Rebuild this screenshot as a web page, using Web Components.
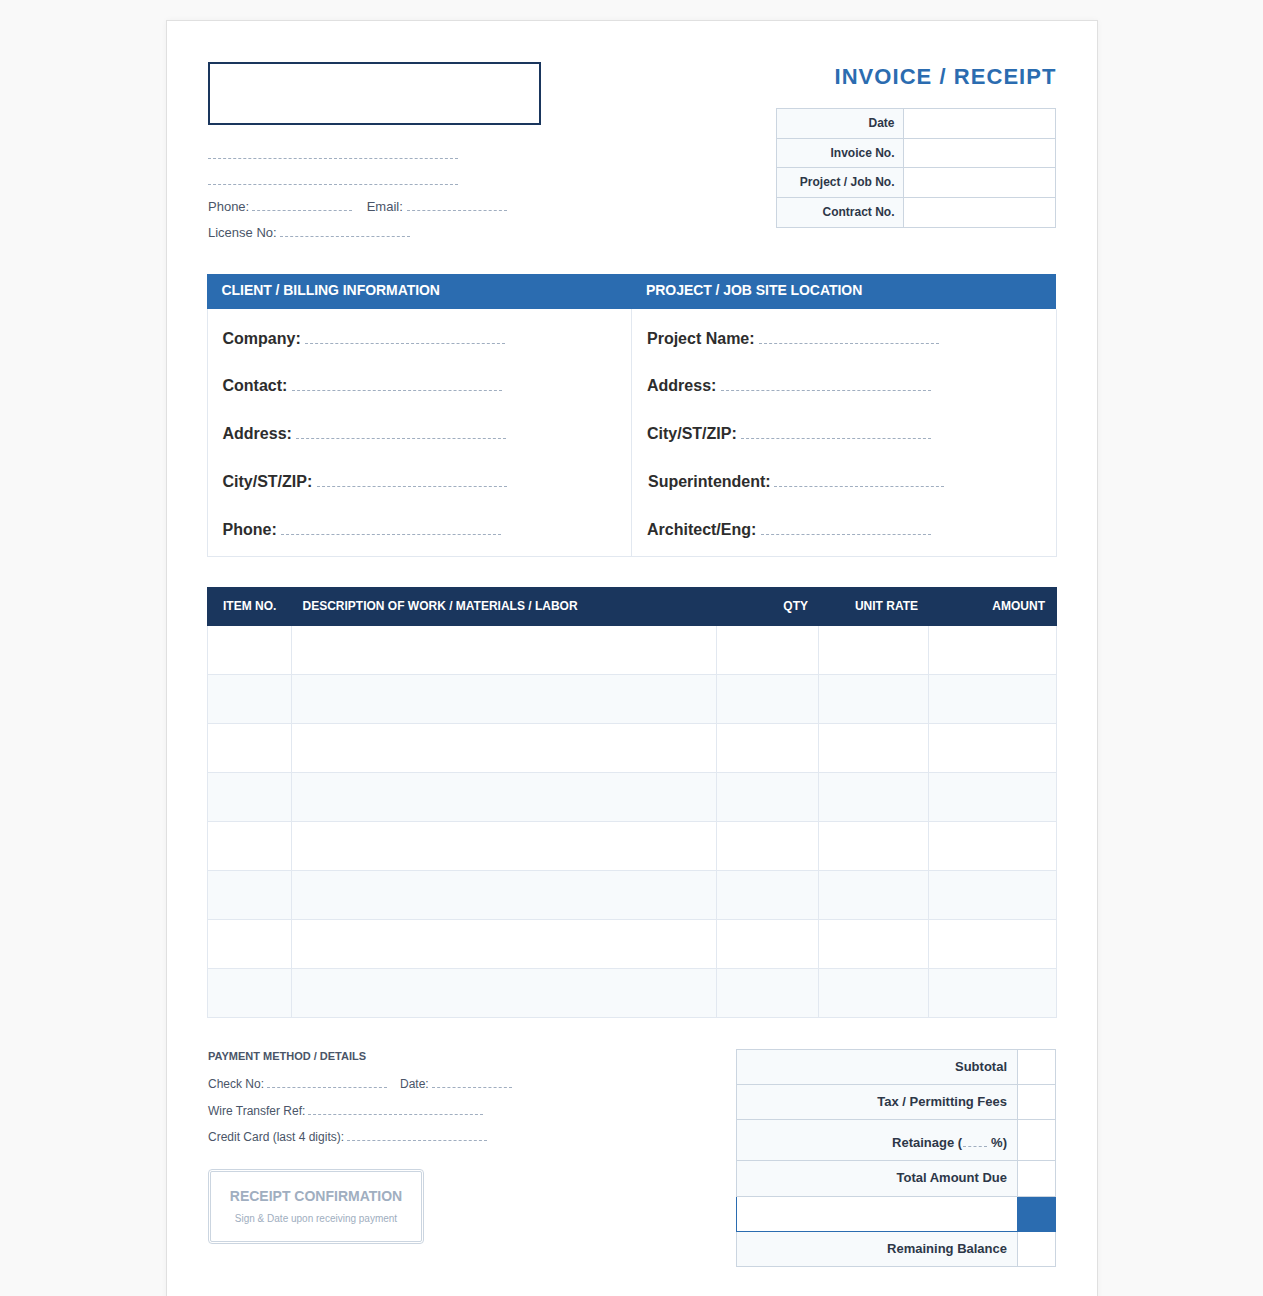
<!DOCTYPE html>
<html lang="en">
<head>
<meta charset="utf-8">
<title>Invoice / Receipt</title>
<style>
  html { height: 1296px; overflow: hidden; }
  body { margin: 0; background: #f9f9f9; font-family: "Liberation Sans", Arial, sans-serif; color: #333; }
</style>
</head>
<body>
<invoice-sheet>
  <invoice-header>
    <fill-line slot="lines" width="250" style="margin-top: 33px"></fill-line>
    <fill-line slot="lines" width="250" style="margin-top: 25px"></fill-line>
    <div slot="contact" style="display: flex">
      <fill-line label="Phone:" width="100" style="--fill-gap: 2.5px"></fill-line>
      <fill-line label="Email:" width="100" style="margin-left: 15px"></fill-line>
    </div>
    <fill-line slot="contact" label="License No:" width="130" style="--fill-gap: 3.3px"></fill-line>
  </invoice-header>
  <info-section></info-section>
  <line-items rows="8"></line-items>
  <invoice-footer></invoice-footer>
</invoice-sheet>

<script>
class FillLine extends HTMLElement {
  constructor () {
    super()
    this.attachShadow({ mode: 'open' })
  }

  connectedCallback () {
    const label = this.getAttribute('label') || ''
    const width = this.getAttribute('width') || 100
    this.shadowRoot.innerHTML = /* html */`
      <style>
        :host { display: inline-flex; align-items: flex-end; line-height: 14px; font-size: var(--fill-size, 12px); }
        .line { width: ${width}px; height: 0; border-bottom: 1px dashed #a0aec0; margin-left: ${label ? 'var(--fill-gap, 4px)' : '0'}; margin-bottom: var(--fill-drop, 3px); }
      </style>
      ${label ? `<span>${label}</span>` : ''}<span class="line"></span>
    `
  }
}

class InvoiceSheet extends HTMLElement {
  constructor () {
    super()
    this.attachShadow({ mode: 'open' })
  }

  connectedCallback () {
    this.shadowRoot.innerHTML = /* html */`
      <style>
        :host {
          display: block;
          box-sizing: border-box;
          width: 932px;
          margin: 20px auto 0;
          padding: 41px 40px 40px;
          background: #fff;
          border: 1px solid #e0e0e0;
          box-shadow: 0 0 6px rgba(0, 0, 0, .04);
        }
      </style>
      <slot></slot>
    `
  }
}

class InvoiceHeader extends HTMLElement {
  constructor () {
    super()
    this.attachShadow({ mode: 'open' })
  }

  connectedCallback () {
    this.shadowRoot.innerHTML = /* html */`
      <style>
        :host { display: flex; justify-content: space-between; height: 211px; width: 849.5px; }
        .left { display: flex; flex-direction: column; padding-left: 1.5px; }
        .logo { box-sizing: border-box; width: 333px; height: 63px; border: 2px solid #1a365d; }
        .lines { display: flex; flex-direction: column; align-items: flex-start; --fill-drop: 0; }
        .lines ::slotted(*) { display: flex; }
        .contact { display: flex; flex-direction: column; gap: 12px; margin-top: 15px; color: #4a5568; --fill-size: 13px; }
        .right { width: 280px; }
        h1 { margin: 0 -.5px 15px 0; height: 31px; line-height: 29px; font-size: 22px; letter-spacing: 1.05px; text-align: right; color: #2b6cb0; }
        table { width: 280px; border-collapse: collapse; table-layout: fixed; font-size: 12px; }
        td { border: 1px solid #cbd5e0; padding: 0 8px; height: 28.7px; }
        td:first-child { width: 109.5px; text-align: right; font-weight: bold; background: #f7fafc; color: #2d3748; }
        tr:nth-child(3) td:first-child { vertical-align: top; padding-top: 7px; height: 21.7px; }
      </style>
      <div class="left">
        <div class="logo"></div>
        <div class="lines"><slot name="lines"></slot></div>
        <div class="contact"><slot name="contact"></slot></div>
      </div>
      <div class="right">
        <h1>INVOICE / RECEIPT</h1>
        <table>
          <tr><td>Date</td><td></td></tr>
          <tr><td>Invoice No.</td><td></td></tr>
          <tr><td>Project / Job No.</td><td></td></tr>
          <tr><td>Contract No.</td><td></td></tr>
        </table>
      </div>
    `
  }
}

class InfoSection extends HTMLElement {
  constructor () {
    super()
    this.attachShadow({ mode: 'open' })
  }

  field ([label, width, style = '']) {
    return `<fill-line label="${label}" width="${width}" style="${style}"></fill-line>`
  }

  connectedCallback () {
    const client = [['Company:', 200], ['Contact:', 210], ['Address:', 210], ['City/ST/ZIP:', 190], ['Phone:', 220]]
    const project = [['Project Name:', 180], ['Address:', 210], ['City/ST/ZIP:', 190], ['Superintendent:', 170, 'margin-left: 1px; --fill-gap: 3.3px'], ['Architect/Eng:', 170]]
    this.shadowRoot.innerHTML = /* html */`
      <style>
        :host { display: block; margin-top: 1px; width: 850px; }
        .bar { display: grid; grid-template-columns: 424.5px 1fr; width: 849.5px; height: 35px; background: #2b6cb0; color: #fff; font-size: 14px; font-weight: bold; line-height: 33px; letter-spacing: -.05px; }
        .bar span { padding-left: 15px; }
        .body { display: grid; grid-template-columns: 424.5px 1fr; height: 248px; box-sizing: border-box; border: 1px solid #e2e8f0; border-top: 0; }
        .col { display: flex; flex-direction: column; align-items: flex-start; gap: 29.75px; padding: 18.6px 15px 0; color: #2d2d2d; font-weight: bold; --fill-size: 16px; --fill-drop: 2px; --fill-gap: 4.3px; }
        .col:first-child { border-right: 1px solid #e2e8f0; }
        fill-line { height: 18px; }
      </style>
      <div class="bar"><span>CLIENT / BILLING INFORMATION</span><span>PROJECT / JOB SITE LOCATION</span></div>
      <div class="body">
        <div class="col">${client.map(this.field).join('')}</div>
        <div class="col">${project.map(this.field).join('')}</div>
      </div>
    `
  }
}

class LineItems extends HTMLElement {
  constructor () {
    super()
    this.attachShadow({ mode: 'open' })
  }

  connectedCallback () {
    const rows = Number(this.getAttribute('rows'))
    const row = '<div class="row"><i></i><i></i><i></i><i></i><i></i></div>'
    this.shadowRoot.innerHTML = /* html */`
      <style>
        :host { display: block; margin-top: 30px; width: 850.5px; }
        .head, .row { display: grid; grid-template-columns: 84.5px 425px 102px 110px 1fr; }
        .head { height: 39px; align-items: center; background: #1a365d; color: #fff; font-size: 12px; font-weight: bold; }
        .head span { padding: 0 10px 2px; }
        .head span:nth-child(1) { padding-left: 16.5px; }
        .head span:nth-child(2) { padding-left: 11.5px; }
        .head span:nth-child(5) { padding-right: 12px; }
        .head .r { text-align: right; }
        .row { height: 49px; box-sizing: border-box; border-bottom: 1px solid #e2e8f0; }
        .row:nth-child(even) { background: #f7fafc; }
        .row i { border-left: 1px solid #e2e8f0; }
        .row i:last-child { border-right: 1px solid #e2e8f0; }
      </style>
      <div class="head">
        <span>ITEM NO.</span>
        <span>DESCRIPTION OF WORK / MATERIALS / LABOR</span>
        <span class="r">QTY</span>
        <span class="r">UNIT RATE</span>
        <span class="r">AMOUNT</span>
      </div>
      ${row.repeat(rows)}
    `
  }
}

class ReceiptStamp extends HTMLElement {
  constructor () {
    super()
    this.attachShadow({ mode: 'open' })
  }

  connectedCallback () {
    this.shadowRoot.innerHTML = /* html */`
      <style>
        :host { display: flex; flex-direction: column; align-items: center; justify-content: center; box-sizing: border-box; width: 216px; height: 75px; padding-bottom: 2px; border: 3px double #cbd5e0; border-radius: 4px; color: #a0aec0; }
        b { font-size: 14px; line-height: 18px; }
        span { margin-top: 8px; font-size: 10px; line-height: 12px; }
      </style>
      <b>RECEIPT CONFIRMATION</b>
      <span>Sign &amp; Date upon receiving payment</span>
    `
  }
}

class TotalsTable extends HTMLElement {
  constructor () {
    super()
    this.attachShadow({ mode: 'open' })
  }

  connectedCallback () {
    this.shadowRoot.innerHTML = /* html */`
      <style>
        :host { display: block; width: 320px; }
        table { width: 320px; border-collapse: collapse; table-layout: fixed; font-size: 13px; }
        td { box-sizing: border-box; border: 1px solid #cbd5e0; padding: 0 10px 2px 9px; height: 35px; text-align: right; font-weight: bold; background: #f7fafc; color: #2d3748; }
        td:last-child { width: 38px; background: #fff; font-size: 0; }
        .tall td { padding: 4px 10px 0 9px; height: 41px; }
        .wide td { height: 36px; }
        .due td { background: #fff; border-left-color: #2b6cb0; border-right-color: #2b6cb0; border-bottom-color: #2b6cb0; }
        .due td:last-child { background: #2b6cb0; }
        .blank { display: inline-block; width: 24px; border-bottom: 1px dashed #a0aec0; margin-right: 4px; margin-left: 1px; }
      </style>
      <table>
        <tr><td>Subtotal</td><td></td></tr>
        <tr><td>Tax / Permitting Fees</td><td></td></tr>
        <tr class="tall"><td>Retainage (<span class="blank"></span>%)</td><td></td></tr>
        <tr class="wide"><td>Total Amount Due</td><td></td></tr>
        <tr class="due"><td></td><td></td></tr>
        <tr><td>Remaining Balance</td><td></td></tr>
      </table>
    `
  }
}

class InvoiceFooter extends HTMLElement {
  constructor () {
    super()
    this.attachShadow({ mode: 'open' })
  }

  connectedCallback () {
    this.shadowRoot.innerHTML = /* html */`
      <style>
        :host { display: flex; justify-content: space-between; margin-top: 31px; width: 849.5px; }
        .pay { padding-left: 1.5px; color: #4a5568; font-size: 12px; --fill-gap: 3.3px; }
        h3 { margin: 0; font-size: 11px; line-height: 14px; color: #4a5568; }
        .fields { display: flex; flex-direction: column; align-items: flex-start; gap: 12.5px; margin-top: 14px; }
        .pair { display: flex; gap: 12.7px; }
        receipt-stamp { margin-top: 25px; }
      </style>
      <div class="pay">
        <h3>PAYMENT METHOD / DETAILS</h3>
        <div class="fields">
          <div class="pair"><fill-line label="Check No:" width="120"></fill-line><fill-line label="Date:" width="80"></fill-line></div>
          <fill-line label="Wire Transfer Ref:" width="175" style="--fill-gap: 2.6px"></fill-line>
          <fill-line label="Credit Card (last 4 digits):" width="140"></fill-line>
        </div>
        <receipt-stamp></receipt-stamp>
      </div>
      <totals-table></totals-table>
    `
  }
}

customElements.define('fill-line', FillLine)
customElements.define('invoice-sheet', InvoiceSheet)
customElements.define('invoice-header', InvoiceHeader)
customElements.define('info-section', InfoSection)
customElements.define('line-items', LineItems)
customElements.define('receipt-stamp', ReceiptStamp)
customElements.define('totals-table', TotalsTable)
customElements.define('invoice-footer', InvoiceFooter)
</script>
</body>
</html>
